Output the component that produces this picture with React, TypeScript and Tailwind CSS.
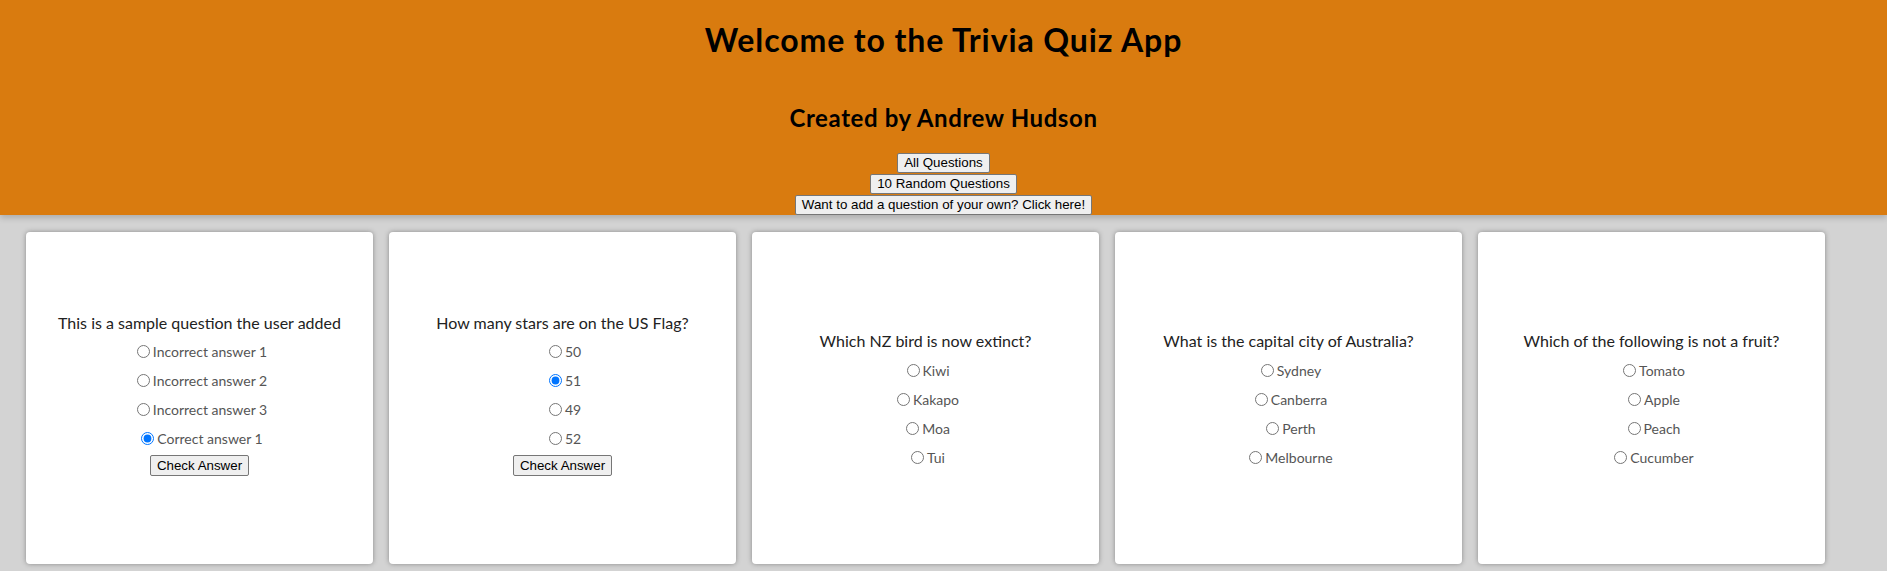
import React from "react";

type Question = {
  id: string;
  text: string;
  answers: string[];
  selected?: number;
  showCheck?: boolean;
};

const questions: Question[] = [
  {
    id: "q1",
    text: "This is a sample question the user added",
    answers: ["Incorrect answer 1", "Incorrect answer 2", "Incorrect answer 3", "Correct answer 1"],
    selected: 3,
    showCheck: true,
  },
  {
    id: "q2",
    text: "How many stars are on the US Flag?",
    answers: ["50", "51", "49", "52"],
    selected: 1,
    showCheck: true,
  },
  {
    id: "q3",
    text: "Which NZ bird is now extinct?",
    answers: ["Kiwi", "Kakapo", "Moa", "Tui"],
  },
  {
    id: "q4",
    text: "What is the capital city of Australia?",
    answers: ["Sydney", "Canberra", "Perth", "Melbourne"],
  },
  {
    id: "q5",
    text: "Which of the following is not a fruit?",
    answers: ["Tomato", "Apple", "Peach", "Cucumber"],
  },
];

const btn =
  "bg-[#efefef] border border-[#767676] rounded-[2px] px-[6px] text-[13.33px] leading-[16px] text-black font-['Liberation_Sans',Arial,sans-serif] cursor-pointer hover:bg-[#e5e5e5]";

function QuestionCard({ q }: { q: Question }) {
  return (
    <div className="w-[347px] h-[332px] shrink-0 pt-[2px] bg-white rounded-[4px] shadow-[0_0_5px_#8a8a8a] flex flex-col items-center justify-center">
      <div className="h-[29px] flex items-center text-[16px] text-[#222]">{q.text}</div>
      {q.answers.map((a, i) => (
        <label key={a} className="h-[29px] flex items-center text-[14px] text-[#555]">
          <input
            type="radio"
            name={q.id}
            defaultChecked={q.selected === i}
            className="ml-[5px] mr-[3px] w-[13px] h-[13px]"
          />
          {a}
        </label>
      ))}
      {q.showCheck && <button className={`${btn} h-[21px] mt-[2px] mb-[14px]`}>Check Answer</button>}
    </div>
  );
}

export default function App() {
  return (
    <div className="min-h-[571px] bg-[#d3d3d3] font-['Lato',sans-serif]">
      {/* HEADER */}
      <header className="relative z-10 h-[215px] bg-[#d97b0f] shadow-[0_3px_6px_rgba(0,0,0,0.18)] flex flex-col items-center text-black">
        <h1 className="mt-[21px] text-[32px] leading-[38px] font-bold tracking-[0.9px]">Welcome to the Trivia Quiz App</h1>
        <h2 className="mt-[44px] text-[24px] leading-[29px] font-bold tracking-[0.6px]">Created by Andrew Hudson</h2>
        <div className="mt-[21px] flex flex-col items-center gap-[1px]">
          <button className={`${btn} h-[20px]`}>All Questions</button>
          <button className={`${btn} h-[20px]`}>10 Random Questions</button>
          <button className={`${btn} h-[20px]`}>Want to add a question of your own? Click here!</button>
        </div>
      </header>

      {/* CARDS */}
      <main className="flex gap-[16px] pl-[26px] pt-[17px] pb-[7px]">
        {questions.map((q) => (
          <QuestionCard key={q.id} q={q} />
        ))}
      </main>
    </div>
  );
}
